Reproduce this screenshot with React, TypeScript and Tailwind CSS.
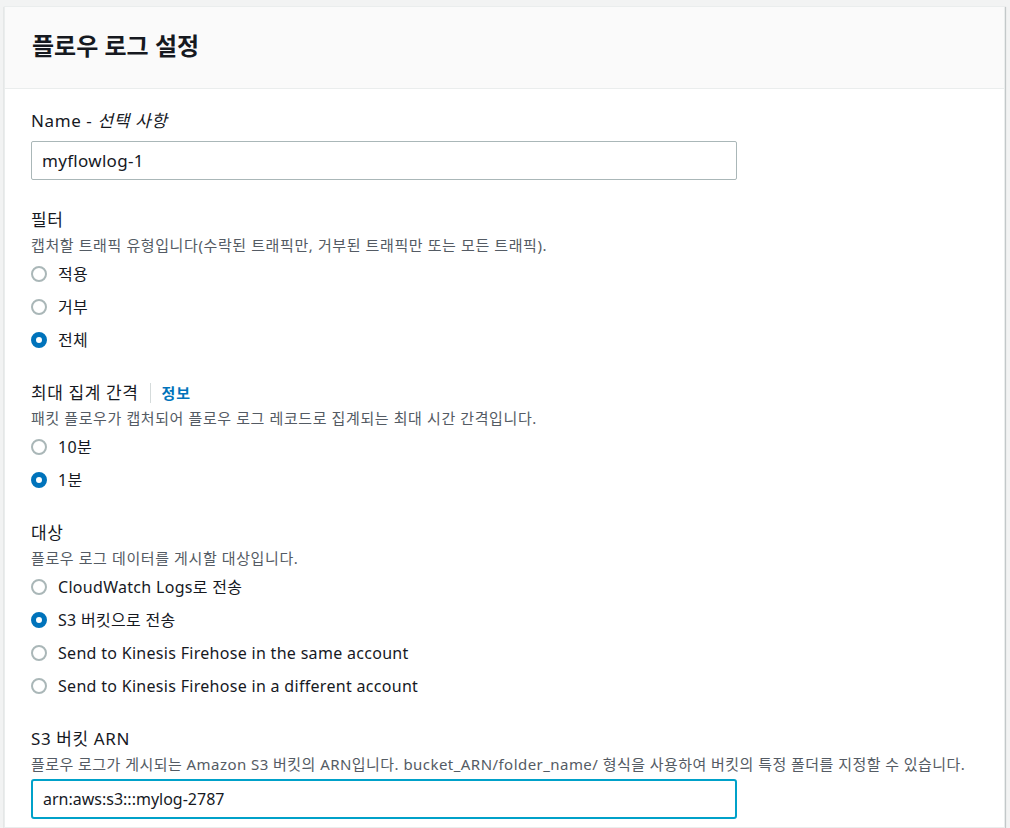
import { useState } from 'react';

const font = { fontFamily: '"Noto Sans", "Noto Sans CJK KR", sans-serif' };

function Radio({ label, checked, onSelect }: { label: string; checked: boolean; onSelect: () => void }) {
  return (
    <label className="flex items-center h-[33px] cursor-pointer" onClick={onSelect}>
      {checked ? (
        <span className="w-4 h-4 rounded-full border-[5px] border-[#0073bb] bg-white shrink-0" />
      ) : (
        <span className="w-4 h-4 rounded-full border-2 border-[#aab7b8] bg-white shrink-0" />
      )}
      <span className="ml-[11px] text-[16px] tracking-[0.3px] text-[#16191f]">{label}</span>
    </label>
  );
}

function Field({
  label,
  info,
  desc,
  descClass = 'tracking-[0.6px]',
  gap = 'mt-[1px]',
  children,
}: {
  label: React.ReactNode;
  info?: boolean;
  desc?: string;
  descClass?: string;
  gap?: string;
  children: React.ReactNode;
}) {
  return (
    <div className="flex flex-col">
      <div className="flex items-center h-[24px] text-[17px] tracking-[0.6px] text-[#16191f]">
        {label}
        {info && (
          <>
            <span className="ml-[12px] mr-[10px] w-px h-[20px] bg-[#d5dbdb]" />
            <span className="text-[15px] tracking-[1px] font-bold text-[#0073bb]">정보</span>
          </>
        )}
      </div>
      {desc && (
        <div className={`text-[15px] leading-[22px] text-[#545b64] mt-[2px] whitespace-nowrap ${descClass}`}>{desc}</div>
      )}
      <div className={gap}>{children}</div>
    </div>
  );
}

export default function App() {
  const [filter, setFilter] = useState('all');
  const [interval, setInterval] = useState('1');
  const [dest, setDest] = useState('s3');

  return (
    <div className="min-h-screen bg-[#f2f3f3] pt-[6px] pl-[4px] pr-[5px]" style={font}>
      <div className="bg-white border border-[#eaeded] shadow-[0_1px_1px_0_rgba(0,28,36,0.3),1px_1px_1px_0_rgba(0,28,36,0.15)] min-h-[822px]">
        <div className="h-[82px] bg-[#fafafa] border-b border-[#eaeded] flex items-center px-[27px]">
          <h2 className="text-[24px] font-bold text-[#16191f] -mt-[4px]">플로우 로그 설정</h2>
        </div>
        <div className="px-[26px] pt-[20px] flex flex-col gap-[25px]">
          <Field
            label={
              <>
                Name -&nbsp;<i className="italic">선택 사항</i>
              </>
            }
            gap="mt-[8px] pb-[3px]"
          >
            <input
              defaultValue="myflowlog-1"
              className="w-[706px] h-[39px] border border-[#aab7b8] rounded-[2px] px-[10px] text-[17px] tracking-[0.3px] text-[#16191f] outline-none"
            />
          </Field>

          <Field label="필터" desc="캡처할 트래픽 유형입니다(수락된 트래픽만, 거부된 트래픽만 또는 모든 트래픽).">
            <Radio label="적용" checked={filter === 'accept'} onSelect={() => setFilter('accept')} />
            <Radio label="거부" checked={filter === 'reject'} onSelect={() => setFilter('reject')} />
            <Radio label="전체" checked={filter === 'all'} onSelect={() => setFilter('all')} />
          </Field>

          <Field label="최대 집계 간격" info desc="패킷 플로우가 캡처되어 플로우 로그 레코드로 집계되는 최대 시간 간격입니다.">
            <Radio label="10분" checked={interval === '10'} onSelect={() => setInterval('10')} />
            <Radio label="1분" checked={interval === '1'} onSelect={() => setInterval('1')} />
          </Field>

          <Field label="대상" desc="플로우 로그 데이터를 게시할 대상입니다.">
            <Radio label="CloudWatch Logs로 전송" checked={dest === 'cw'} onSelect={() => setDest('cw')} />
            <Radio label="S3 버킷으로 전송" checked={dest === 's3'} onSelect={() => setDest('s3')} />
            <Radio
              label="Send to Kinesis Firehose in the same account"
              checked={dest === 'kf-same'}
              onSelect={() => setDest('kf-same')}
            />
            <Radio
              label="Send to Kinesis Firehose in a different account"
              checked={dest === 'kf-diff'}
              onSelect={() => setDest('kf-diff')}
            />
          </Field>

          <Field
            label="S3 버킷 ARN"
            desc="플로우 로그가 게시되는 Amazon S3 버킷의 ARN입니다. bucket_ARN/folder_name/ 형식을 사용하여 버킷의 특정 폴더를 지정할 수 있습니다."
            descClass="tracking-[0.45px]"
            gap="mt-[4px]"
          >
            <input
              defaultValue="arn:aws:s3:::mylog-2787"
              className="w-[706px] h-[40px] border-2 border-[#00a1c9] rounded-[3px] px-[10px] text-[16px] text-[#16191f] outline-none"
            />
          </Field>
        </div>
      </div>
    </div>
  );
}
